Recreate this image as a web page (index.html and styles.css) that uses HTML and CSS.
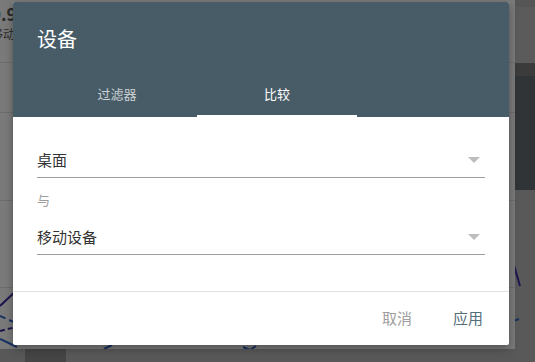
FILE: index.html
```html
<!DOCTYPE html>
<html lang="zh-CN">
<head>
  <meta charset="UTF-8" />
  <meta name="viewport" content="width=device-width, initial-scale=1.0" />
  <title>设备</title>
  <link rel="stylesheet" href="styles.css">
</head>
<body>
  <!-- page behind the dialog -->
  <div class="app">
    <div class="main">
      <div class="row row-head">
        <div class="stat">0.9</div>
        <div class="stat-label">移动</div>
      </div>
      <div class="row row-a"></div>
      <div class="row row-b"></div>
      <div class="row row-c"></div>
      <div class="chart">
        <svg width="515" height="62" viewBox="0 287 515 62">
          <path d="M0 305 L18 288" stroke="#3b2a9a" stroke-width="2" fill="none"/>
          <path d="M0 315 L16 322" stroke="#2f63c0" stroke-width="2" stroke-dasharray="6 4" fill="none"/>
          <path d="M0 330 L16 326" stroke="#3b2a9a" stroke-width="2" stroke-dasharray="5 3" fill="none"/>
          <path d="M0 338 L17 346" stroke="#2f63c0" stroke-width="2" fill="none"/>
          <path d="M104 348 L112 344" stroke="#2f63c0" stroke-width="2" fill="none"/>
          <path d="M243 346 L250 349 L256 345" stroke="#2f63c0" stroke-width="2" fill="none"/>
        </svg>
      </div>
      <div class="foot"><span class="foot-block"></span></div>
    </div>
    <div class="side">
      <div class="band band-top"></div>
      <div class="band band-a"></div>
      <div class="band band-b"></div>
      <div class="band band-c"></div>
      <div class="band band-foot">
        <svg width="20" height="160" viewBox="515 190 20 160">
          <path d="M513 262 L520 286" stroke="#3b2a9a" stroke-width="2" fill="none"/>
          <path d="M513 321 L519 319" stroke="#2f63c0" stroke-width="2" fill="none"/>
        </svg>
      </div>
    </div>
  </div>

  <div class="scrim"></div>

  <!-- DIALOG -->
  <div class="dialog">
    <div class="dialog-head">
      <h1 class="dialog-title">设备</h1>
      <div class="tabs">
        <div class="tab">过滤器</div>
        <div class="tab active">比较</div>
      </div>
    </div>

    <div class="dialog-body">
      <div class="select">
        <span>桌面</span>
        <span class="caret"></span>
      </div>
      <div class="with">与</div>
      <div class="select">
        <span>移动设备</span>
        <span class="caret"></span>
      </div>
    </div>

    <div class="dialog-foot">
      <button class="btn">取消</button>
      <button class="btn primary">应用</button>
    </div>
  </div>
</body>
</html>
```

FILE: styles.css
```css
/* ---------- BASE ---------- */
*{margin:0;padding:0;box-sizing:border-box;}
html,body{
  width:535px;height:362px;
  overflow:hidden;
  font-family:"Noto Sans CJK SC","Noto Sans",sans-serif;
  background:#b0b0b0;
}
body{position:relative;}

/* ---------- PAGE BEHIND ---------- */
.app{display:flex;height:362px;}
.main{
  width:515px;
  background:#f4f4f4;
  display:flex;flex-direction:column;
}
.row{border-bottom:1px solid #dadada;}
.row-head{height:63px;padding:5px 0 0;margin-left:-9px;color:#555;}
.stat{font-size:17px;font-weight:700;line-height:18px;}
.stat-label{font-size:12px;line-height:14px;margin-top:4px;}
.row-a{height:50px;}
.row-b{height:88px;}
.row-c{height:87px;}
.chart{height:61px;}
.chart svg{display:block;}
.foot{flex:1;background:#b0b0b0;padding-left:25px;}
.foot-block{display:block;width:41px;height:100%;background:#888;}

.side{flex:1;display:flex;flex-direction:column;}
.band-top{height:7px;background:#aaa;}
.band-a{height:56px;background:#b6b6b6;}
.band-b{height:13px;background:#777;}
.band-c{height:114px;background:#60686c;}
.band-foot{flex:1;background:#b2b2b2;overflow:hidden;}
.band-foot svg{display:block;}

.scrim{position:absolute;inset:0;background:rgba(0,0,0,.5);}

/* ---------- DIALOG ---------- */
.dialog{
  position:absolute;
  left:13px;top:2px;
  width:496px;height:343px;
  background:#fff;
  border-radius:2px;
  box-shadow:0 3px 8px rgba(0,0,0,.35);
  display:flex;flex-direction:column;
  overflow:hidden;
}
.dialog-head{background:#485c67;height:115px;padding:0 24px;display:flex;flex-direction:column;}
.dialog-title{
  color:#fff;font-size:20px;font-weight:400;
  line-height:28px;margin-top:23px;
}
.tabs{display:flex;margin-top:auto;}
.tab{
  width:160px;height:46px;
  display:flex;align-items:center;justify-content:center;
  color:rgba(255,255,255,.72);
  font-size:13px;
  border-bottom:2px solid transparent;
}
.tab.active{color:#fff;border-bottom-color:#fff;}

.dialog-body{padding:0 24px;border-bottom:1px solid #e0e0e0;height:175px;}
.select{
  height:36px;
  display:flex;align-items:center;justify-content:space-between;
  border-bottom:1px solid #9e9e9e;
  font-size:15px;color:#333;
}
.select:first-child{margin-top:25px;}
.caret{
  width:0;height:0;margin-right:5px;
  border-left:6px solid transparent;
  border-right:6px solid transparent;
  border-top:6px solid #bdbdbd;
}
.with{font-size:13px;color:#9e9e9e;line-height:20px;margin:12px 0 9px;}

.dialog-foot{flex:1;display:flex;justify-content:flex-end;align-items:center;gap:25px;padding:0 18px 2px;}
.btn{
  background:none;border:0;
  font-family:inherit;font-size:15px;
  padding:6px 8px;
  color:#9e9e9e;
}
.btn.primary{color:#546e7a;}
```
